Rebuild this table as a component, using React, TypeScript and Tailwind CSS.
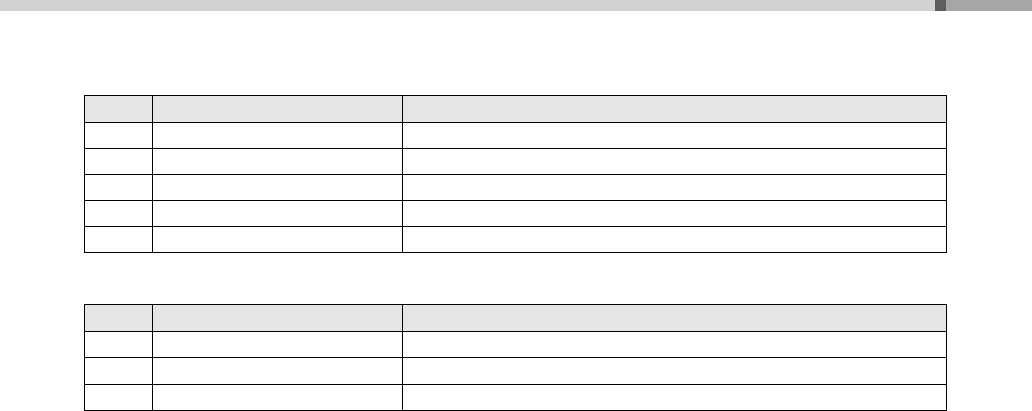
const firstRows = [27, 26, 26, 26, 26, 26];
const secondRows = [27, 26, 27, 26];

function GridTable({ rows }: { rows: number[] }) {
  return (
    <div className="w-[863px] border-l border-t border-black">
      {rows.map((h, i) => (
        <div
          key={i}
          className={`grid grid-cols-[68px_250px_544px] ${i === 0 ? "bg-[#e5e5e5]" : "bg-white"}`}
          style={{ height: h }}
        >
          <div className="border-b border-r border-black" />
          <div className="border-b border-r border-black" />
          <div className="border-b border-r border-black" />
        </div>
      ))}
    </div>
  );
}

export default function App() {
  return (
    <div className="min-h-[411px] w-[1032px] bg-white font-['Liberation_Sans',sans-serif]">
      <div className="flex h-[11px]">
        <div className="flex-1 bg-[#d2d2d2]" />
        <div className="w-[11px] bg-[#5f5d5d]" />
        <div className="w-[86px] bg-[#a7a5a5]" />
      </div>

      <div className="flex flex-col gap-[51px] pl-[84px] pt-[84px]">
        <GridTable rows={firstRows} />
        <GridTable rows={secondRows} />
      </div>
    </div>
  );
}
